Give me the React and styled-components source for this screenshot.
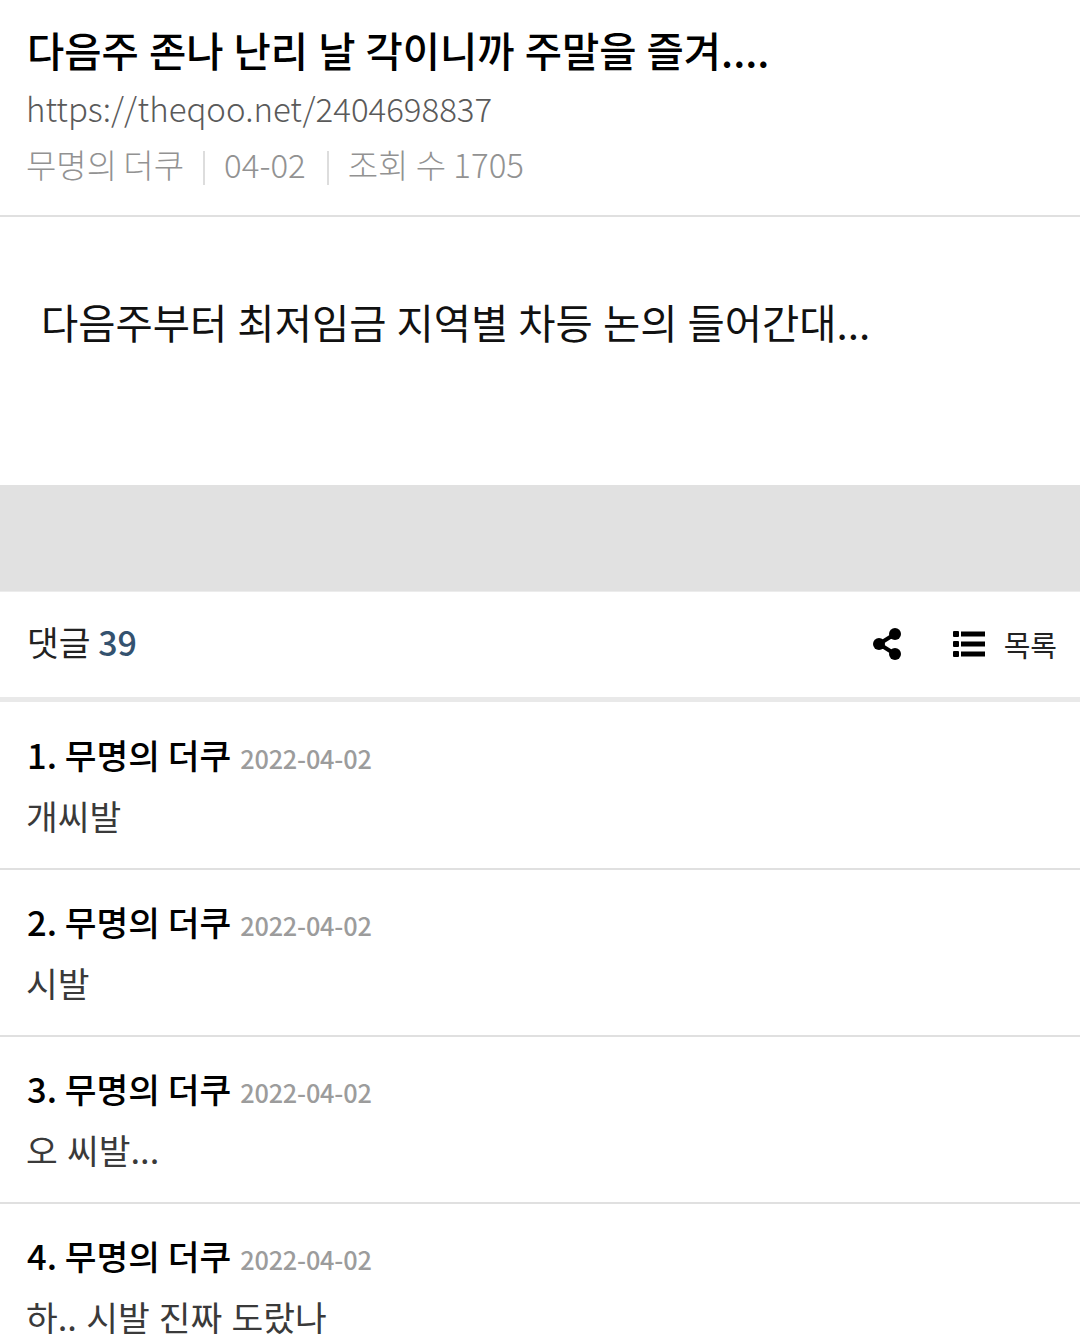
import React from 'react';
import styled, { createGlobalStyle } from 'styled-components';

const GlobalStyle = createGlobalStyle`
  html, body {
    margin: 0;
    padding: 0;
    background: #fff;
    font-family: "Noto Sans CJK KR", "Noto Sans", sans-serif;
    overflow: hidden;
  }
`;

const Page = styled.div`
  width: 1080px;
  height: 1338px;
  overflow: hidden;
  background: #fff;
`;

const PostHeader = styled.header`
  height: 189px;
  padding: 26px 28px 0 26px;
  border-bottom: 2px solid #e0e0e0;
`;

const Title = styled.h1`
  margin: 0 0 0 1px;
  font-size: 40.5px;
  line-height: 48px;
  font-weight: 500;
  word-spacing: 1px;
  color: #000;
  white-space: nowrap;
`;

const Url = styled.div`
  margin-top: 10px;
  font-size: 33px;
  line-height: 48px;
  font-weight: 300;
  color: #5a5a5a;
`;

const Meta = styled.div`
  margin-top: 8px;
  display: flex;
  align-items: center;
  font-size: 33px;
  line-height: 48px;
  font-weight: 300;
  color: #929292;
`;

const MetaName = styled.span`
  margin-right: -2px;
  word-spacing: -1px;
`;

const MetaDivider = styled.span`
  width: 2px;
  height: 34px;
  margin: 8px 19px 0 21px;
  background: #ddd;
`;

const PostBody = styled.div`
  height: 268px;
  padding: 77px 0 0 41px;
  box-sizing: border-box;
  font-size: 40.5px;
  line-height: 56px;
  font-weight: 400;
  word-spacing: 1px;
  color: #111;
`;

const Gap = styled.div`
  height: 106px;
  background: #e1e1e1;
  border-bottom: 1px solid #ececec;
`;

const CommentBar = styled.div`
  height: 103px;
  padding: 0 23px 2px 27px;
  display: flex;
  align-items: center;
  justify-content: space-between;
  border-bottom: 5px solid #e9e9e9;
`;

const CommentTitle = styled.div`
  margin-bottom: 4px;
  font-size: 34.5px;
  line-height: 48px;
  color: #222;
`;

const CommentCount = styled.span`
  font-size: 34px;
  font-weight: 500;
  color: #34526f;
`;

const Actions = styled.div`
  display: flex;
  align-items: center;
`;

const IconButton = styled.span`
  display: flex;
  margin-right: ${({ $gap }) => $gap}px;
`;

const ListLabel = styled.span`
  font-size: 29px;
  line-height: 40px;
  color: #222;
`;

const CommentList = styled.div`
  padding-top: 1px;
`;

const CommentRow = styled.div`
  height: 138px;
  padding: 27px 28px 0 27px;
  border-bottom: 2px solid #e0e0e0;
`;

const CommentHead = styled.div`
  line-height: 48px;
  white-space: nowrap;
`;

const Author = styled.span`
  font-size: 34.5px;
  font-weight: 500;
  color: #000;
`;

const DateText = styled.span`
  margin-left: 9px;
  font-size: 25.3px;
  font-weight: 500;
  letter-spacing: -0.2px;
  color: #9c9c9c;
`;

const CommentText = styled.div`
  margin: 5px 0 0 -1px;
  font-size: 34.5px;
  line-height: 48px;
  font-weight: 400;
  word-spacing: 1.5px;
  color: #3a3a3a;
`;

const ShareIcon = () => (
  <svg width="28" height="32" viewBox="0 0 28 32" fill="#000">
    <circle cx="6" cy="16" r="6" />
    <circle cx="22" cy="6" r="6" />
    <circle cx="22" cy="26" r="6" />
    <path d="M6 16 22 6M6 16l16 10" stroke="#000" strokeWidth="4" />
  </svg>
);

const ListIcon = () => (
  <svg width="32" height="28" viewBox="0 0 32 28" fill="#000">
    <rect x="0" y="1" width="6" height="6" rx="1" />
    <rect x="0" y="11" width="6" height="6" rx="1" />
    <rect x="0" y="21" width="6" height="6" rx="1" />
    <rect x="8" y="1.5" width="24" height="5" />
    <rect x="8" y="11.5" width="24" height="5" />
    <rect x="8" y="21.5" width="24" height="5" />
  </svg>
);

const comments = [
  { id: 1, text: '개씨발' },
  { id: 2, text: '시발' },
  { id: 3, text: '오 씨발...' },
  { id: 4, text: '하.. 시발 진짜 도랐나' },
];

export default function App() {
  return (
    <Page>
      <GlobalStyle />
      <PostHeader>
        <Title>다음주 존나 난리 날 각이니까 주말을 즐겨....</Title>
        <Url>https://theqoo.net/2404698837</Url>
        <Meta>
          <MetaName>무명의 더쿠</MetaName>
          <MetaDivider />
          <span>04-02</span>
          <MetaDivider />
          <span>조회 수 1705</span>
        </Meta>
      </PostHeader>
      <PostBody>다음주부터 최저임금 지역별 차등 논의 들어간대...</PostBody>
      <Gap />
      <CommentBar>
        <CommentTitle>
          댓글 <CommentCount>39</CommentCount>
        </CommentTitle>
        <Actions>
          <IconButton $gap={52}>
            <ShareIcon />
          </IconButton>
          <IconButton $gap={19}>
            <ListIcon />
          </IconButton>
          <ListLabel>목록</ListLabel>
        </Actions>
      </CommentBar>
      <CommentList>
        {comments.map((c) => (
          <CommentRow key={c.id}>
            <CommentHead>
              <Author>{c.id}. 무명의 더쿠</Author>
              <DateText>2022-04-02</DateText>
            </CommentHead>
            <CommentText>{c.text}</CommentText>
          </CommentRow>
        ))}
      </CommentList>
    </Page>
  );
}
